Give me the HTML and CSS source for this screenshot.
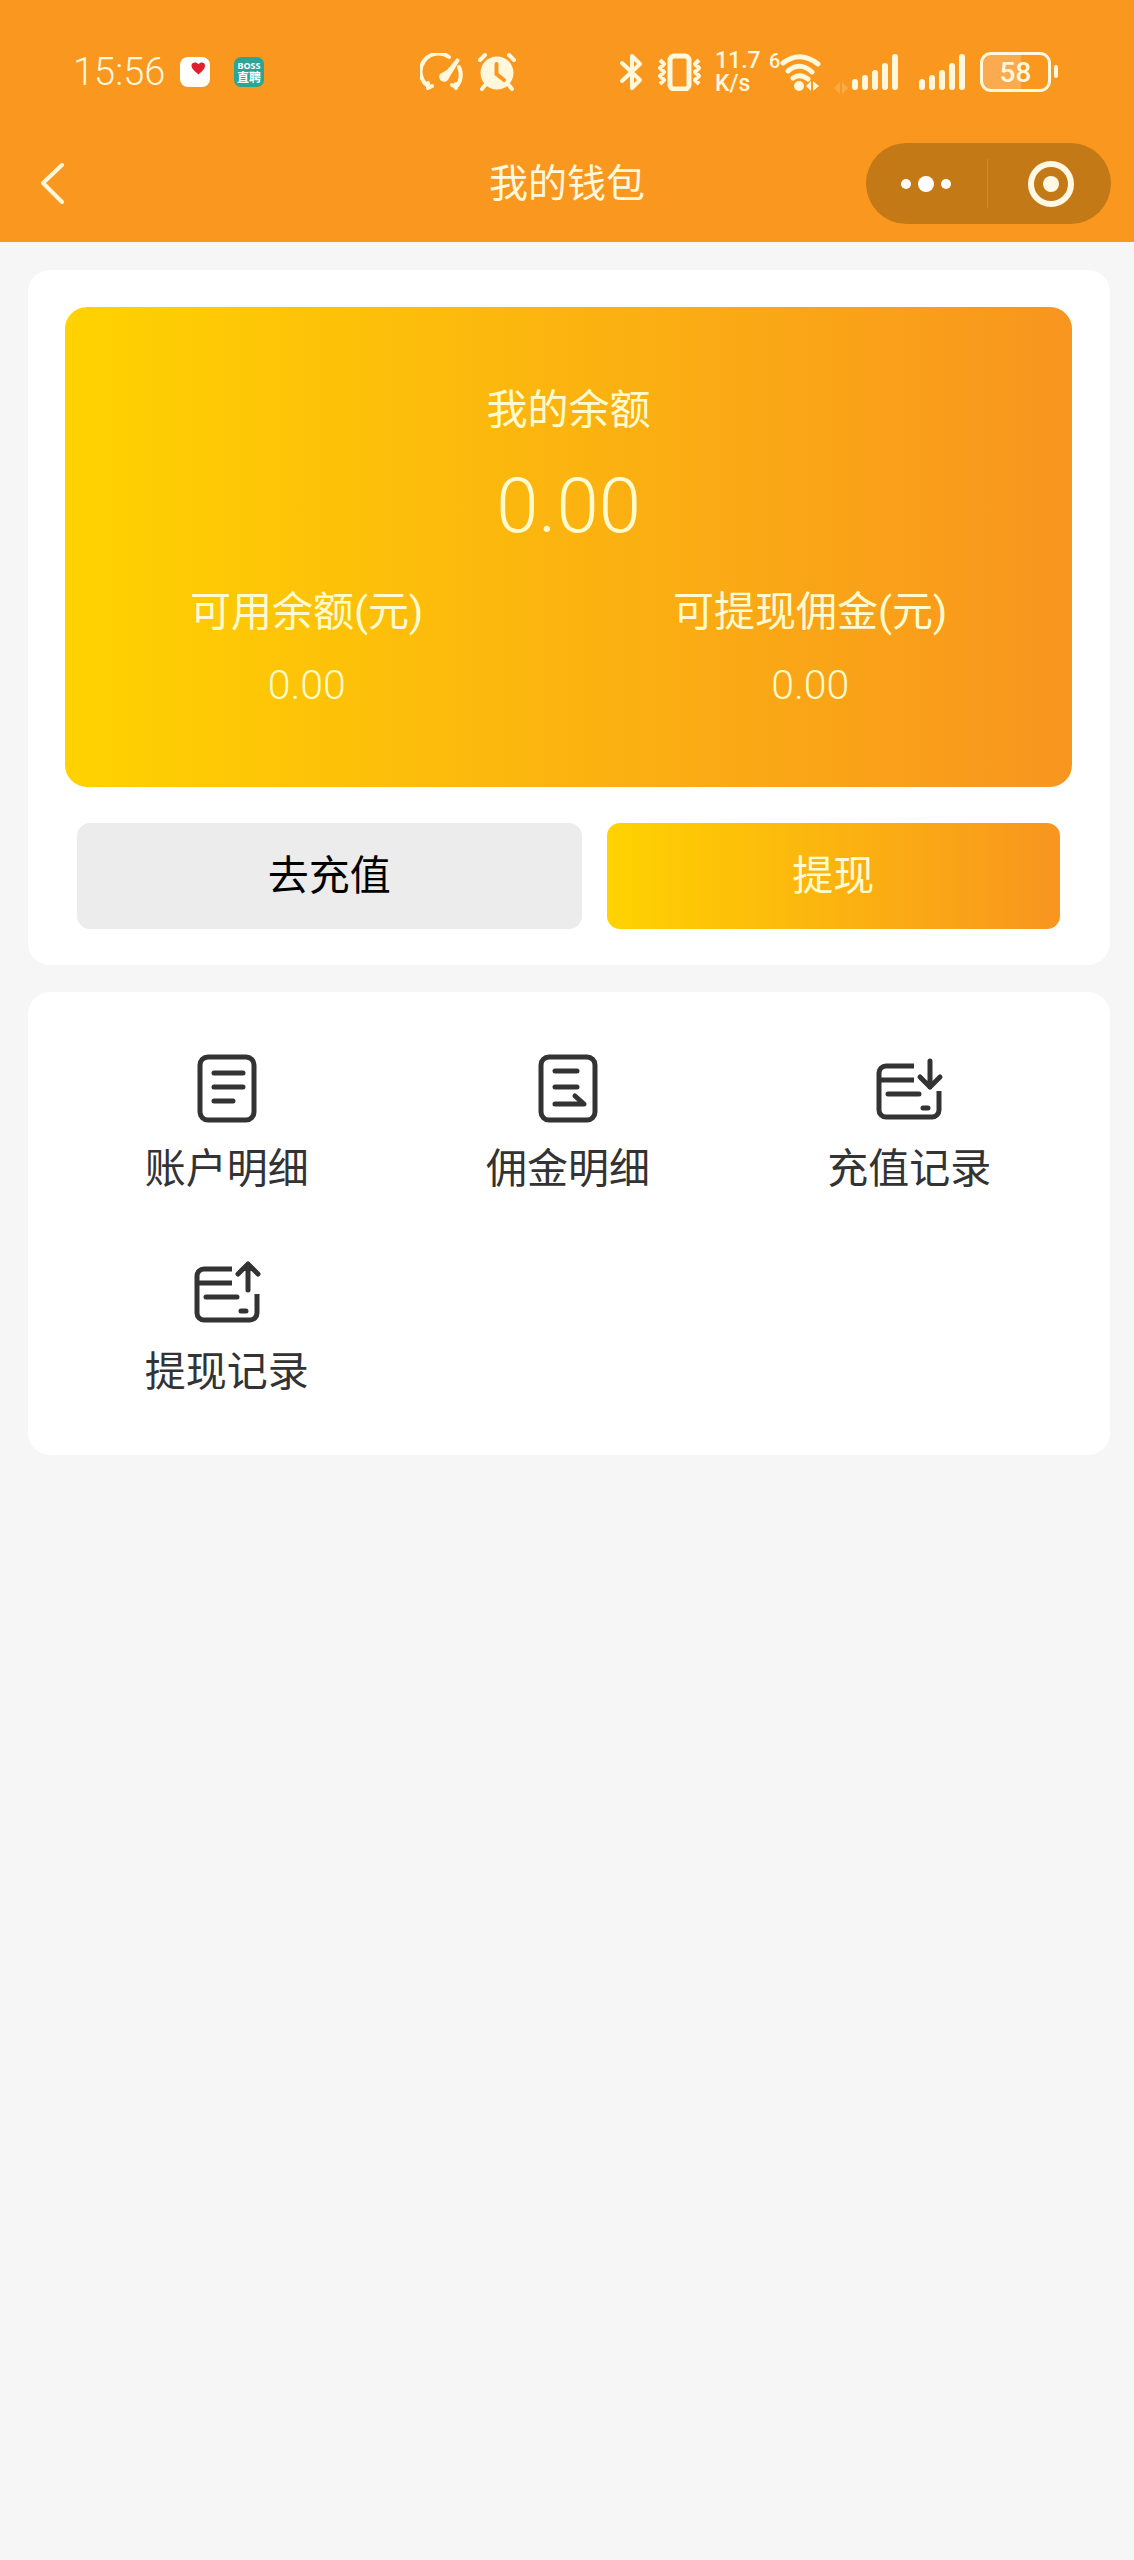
FILE: index.html
```html
<!DOCTYPE html>
<html lang="zh-CN">
<head>
<meta charset="utf-8">
<meta name="viewport" content="width=device-width, initial-scale=1">
<title>我的钱包</title>
<link rel="stylesheet" href="styles.css">
</head>
<body>
<header class="header">
  <div class="status">
    <div class="status-left">
      <span class="clock">15:56</span>
      <svg class="app-heart" width="30" height="30" viewBox="0 0 30 30" aria-hidden="true"><rect width="30" height="30" rx="8" fill="#fff"/><path d="M18.500 17.500C15 14.500 11.500 12 11.500 8.600C11.500 5 16.500 4.300 18.500 7.300C20.500 4.300 25 5 25 8.600C25 12 22 14.500 18.500 17.500Z" fill="#e0202c"/></svg>
      <svg class="app-boss" width="30" height="30" viewBox="0 0 30 30" aria-hidden="true"><rect width="30" height="30" rx="7" fill="#2ba596"/><text x="15" y="12" class="boss-latin">BOSS</text><text x="15" y="25" class="boss-han">直聘</text></svg>
    </div>
    <div class="status-mid">
      <svg width="44" height="38" viewBox="0 0 44 38" fill="none" stroke="currentColor" stroke-width="4" stroke-linecap="round" stroke-linejoin="round" aria-hidden="true"><path d="M8 35V30M8 35L12 33M8 33A17.500 17.500 0 0 1 29 4"/><path d="M39 14A18 18 0 0 1 36 34L32 32M36 35V31"/><path d="M27 17L37 5L40 7L29 25A5 5 0 1 1 20 21Z" fill="currentColor" stroke="none"/></svg>
      <svg width="38" height="38" viewBox="0 0 38 38" fill="none" stroke="currentColor" stroke-linecap="round" aria-hidden="true"><path d="M2 7L7 2M31 2L36 7M8 31L4 36M30 31L34 36" stroke-width="4"/><circle cx="19" cy="20" r="16.500" fill="currentColor" stroke="none"/><path d="M18.500 11V21L26 27" stroke="#f9971f" stroke-width="4"/></svg>
    </div>
    <div class="status-right">
      <svg class="bluetooth" width="24" height="38" viewBox="0 0 24 38" fill="none" stroke="currentColor" stroke-width="4" stroke-linecap="round" stroke-linejoin="round" aria-hidden="true"><path d="M3 10L21 27L13 35V3L21 11L3 28"/></svg>
      <svg class="vibrate" width="46" height="38" viewBox="0 0 46 38" fill="none" stroke="currentColor" stroke-linejoin="round" aria-hidden="true"><rect x="13" y="3" width="19" height="33" rx="4" stroke-width="5"/><path d="M3 7L7 11L3 15L7 19L3 23L7 27L3 31M42 7L38 11L42 15L38 19L42 23L38 27L42 31" stroke-width="4"/></svg>
      <span class="speed"><span>11.7</span><span>K/s</span></span>
      <span class="wifi-gen">6</span>
      <svg class="wifi" width="42" height="38" viewBox="12 0 42 38" fill="none" stroke="currentColor" stroke-linecap="round" aria-hidden="true"><path d="M15 10Q32 -3 50 11M20 18Q32 8 44 19M25 25Q32 20 40 26" stroke-width="5"/><circle cx="31" cy="33" r="5" fill="currentColor" stroke="none"/><path d="M43 28V38L38 33ZM45 28V38L51 33Z" fill="currentColor" stroke="none"/></svg>
      <svg class="data" width="14" height="14" viewBox="0 0 14 14" aria-hidden="true"><path d="M6 1V13L0 7ZM8 1V13L14 7Z" fill="#fbab45"/></svg>
      <svg class="signal" width="48" height="38" viewBox="0 0 48 38" fill="none" stroke="currentColor" stroke-width="6" stroke-linecap="round" aria-hidden="true"><path d="M3 29V34M13 25V34M23 20V34M33 13V34M43 4V34"/></svg>
      <svg class="signal" width="48" height="38" viewBox="0 0 48 38" fill="none" stroke="currentColor" stroke-width="6" stroke-linecap="round" aria-hidden="true"><path d="M3 29V34M13 25V34M23 20V34M33 13V34M43 4V34"/></svg>
      <span class="battery"><span class="battery-body">58</span><span class="battery-nub"></span></span>
    </div>
  </div>
  <div class="nav">
    <button class="back" type="button" aria-label="返回"><svg width="26" height="46" viewBox="0 0 26 46" fill="none" stroke="currentColor" stroke-width="4" stroke-linecap="round" stroke-linejoin="round"><path d="M23 4L4 22L23 41"/></svg></button>
    <h1 class="title">我的钱包</h1>
    <div class="capsule">
      <button class="capsule-button" type="button" aria-label="更多"><svg width="52" height="20" viewBox="0 0 52 20" fill="#fff"><circle cx="6" cy="10" r="5"/><circle cx="26" cy="10" r="8"/><circle cx="46" cy="10" r="5"/></svg></button>
      <button class="capsule-button" type="button" aria-label="关闭"><svg width="48" height="48" viewBox="0 0 48 48"><circle cx="24" cy="24" r="20" fill="none" stroke="#fff8e4" stroke-width="6"/><circle cx="24" cy="24" r="8" fill="#fff8e4"/></svg></button>
    </div>
  </div>
</header>

<main class="content">
  <section class="card wallet">
    <div class="balance">
      <h2 class="balance-title">我的余额</h2>
      <p class="balance-total">0.00</p>
      <dl class="balance-parts">
        <div><dt>可用余额(元)</dt><dd>0.00</dd></div>
        <div><dt>可提现佣金(元)</dt><dd>0.00</dd></div>
      </dl>
    </div>
    <div class="actions">
      <button class="action recharge" type="button">去充值</button>
      <button class="action withdraw" type="button">提现</button>
    </div>
  </section>

  <nav class="card menu">
    <a class="menu-item" href="#account">
      <svg width="72" height="72" viewBox="0 0 72 72" fill="none" stroke="currentColor" stroke-width="5" stroke-linecap="round" aria-hidden="true"><rect x="9" y="4" width="54" height="63" rx="8"/><path d="M23 20H52M23 34H52M23 48H42"/></svg>
      <span>账户明细</span>
    </a>
    <a class="menu-item" href="#commission">
      <svg width="72" height="72" viewBox="0 0 72 72" fill="none" stroke="currentColor" stroke-width="5" stroke-linecap="round" stroke-linejoin="round" aria-hidden="true"><rect x="9" y="4" width="54" height="63" rx="8"/><path d="M23 18H45M23 34H45M23 51H52L43 43"/></svg>
      <span>佣金明细</span>
    </a>
    <a class="menu-item" href="#recharges">
      <svg width="72" height="72" viewBox="0 0 72 72" fill="none" stroke="currentColor" stroke-width="5" aria-hidden="true"><path d="M41 13H13A7 7 0 0 0 6 20V57A7 7 0 0 0 13 64H59A7 7 0 0 0 66 57V38M6 27H41"/><path d="M15 41H46M50 55H55M57 8V34M47 24L57 34L67 24" stroke-linecap="round" stroke-linejoin="round"/></svg>
      <span>充值记录</span>
    </a>
    <a class="menu-item" href="#withdrawals">
      <svg width="72" height="72" viewBox="0 0 72 72" fill="none" stroke="currentColor" stroke-width="5" aria-hidden="true"><path d="M41 13H13A7 7 0 0 0 6 20V57A7 7 0 0 0 13 64H59A7 7 0 0 0 66 57V38M6 27H41"/><path d="M15 41H46M50 55H55M57 34V8M47 18L57 8L67 18" stroke-linecap="round" stroke-linejoin="round"/></svg>
      <span>提现记录</span>
    </a>
  </nav>
</main>
</body>
</html>
```
FILE: styles.css
```css
* { box-sizing: border-box; }

body {
  margin: 0;
  min-height: 100vh;
  background: #f6f6f6;
  color: #333;
  font-family: Roboto, "Noto Sans CJK SC", sans-serif;
  font-size: 41px;
  line-height: 48px;
}

h1, h2, p, dl, dd { margin: 0; font-size: inherit; font-weight: 400; }
button { padding: 0; border: 0; background: none; color: inherit; font: inherit; cursor: pointer; }
svg { display: block; flex: none; }

/* Header */
.header { padding-bottom: 18px; background: #f9971f; color: #fff8dc; }

.status { display: flex; align-items: center; height: 143px; padding: 0 76px 0 73px; }
.status-left, .status-mid, .status-right { display: flex; align-items: center; }
.clock { width: 107px; font-size: 38px; font-weight: 300; }
.app-boss { margin-left: 24px; }
.boss-latin { fill: #fff; font: 700 9px "Noto Sans", sans-serif; text-anchor: middle; }
.boss-han { fill: #fff; font: 700 12px "Noto Sans CJK SC", sans-serif; text-anchor: middle; }
.status-mid { gap: 14px; margin-left: 156px; }
.status-right { margin-left: auto; }
.vibrate { margin-left: 14px; }
.speed { display: flex; flex-direction: column; width: 54px; margin-left: 12px; font-size: 23px; font-weight: 500; line-height: 23px; }
.wifi-gen { align-self: flex-start; width: 11px; font-size: 20px; font-weight: 500; line-height: 24px; }
.data { align-self: flex-end; margin: 0 4px 0 12px; }
.signal + .signal { margin-left: 19px; }
.battery { display: flex; align-items: center; gap: 3px; margin-left: 13px; }
.battery-body {
  width: 71px;
  height: 40px;
  border: 3px solid;
  border-radius: 11px;
  background: linear-gradient(90deg, #fbab4f 58%, transparent 58%);
  font-size: 28px;
  font-weight: 500;
  line-height: 36px;
  text-align: center;
}
.battery-nub { width: 4px; height: 13px; border-radius: 2px; background: currentColor; }

.nav { display: grid; grid-template-columns: 1fr auto 1fr; align-items: center; padding: 0 23px; }
.back { justify-self: start; margin-left: 16px; }
.title { font-size: 39px; }
.capsule { display: flex; justify-self: end; width: 245px; height: 81px; border-radius: 41px; background: #c47917; }
.capsule-button { display: flex; flex: 1; align-items: center; justify-content: center; position: relative; }
.capsule-button + .capsule-button { padding-left: 4px; }
.capsule-button + .capsule-button::before {
  content: "";
  position: absolute;
  left: 0;
  top: 16px;
  bottom: 16px;
  width: 1px;
  background: #d48a2a;
}

/* Cards */
.content { display: grid; gap: 27px; padding: 28px 24px 28px 28px; }
.card { border-radius: 22px; background: #fff; }

.wallet { padding: 37px 38px 36px 37px; }
.balance {
  padding: 79px 0 78px;
  border-radius: 22px;
  background: linear-gradient(90deg, #ffd200, #f8951f);
  color: #fffbd0;
  text-align: center;
}
.balance-total { margin-top: 24px; font-size: 76px; font-weight: 300; line-height: 96px; }
.balance-parts { display: grid; grid-template-columns: 12fr 13fr; margin-top: 34px; }
dd { margin-top: 25px; font-weight: 300; }

.actions { display: grid; grid-template-columns: 504fr 453fr; gap: 25px; margin-top: 36px; padding: 0 12px; }
.action { height: 106px; border-radius: 13px; }
.recharge { background: #ececec; color: #000; }
.withdraw { background: linear-gradient(90deg, #ffd200, #f8951f); color: #fffbd0; }

/* Record links */
.menu { display: grid; grid-template-columns: repeat(3, 1fr); row-gap: 63px; padding: 61px 30px 59px 28px; }
.menu-item { display: flex; flex-direction: column; align-items: center; gap: 20px; color: #333; text-decoration: none; }
```
